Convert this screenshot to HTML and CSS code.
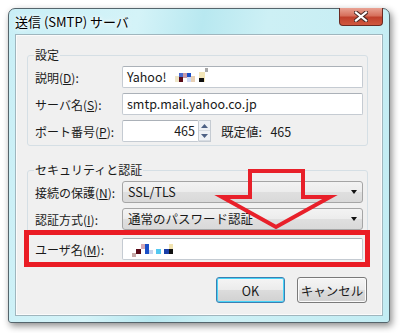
FILE: index.html
```
<!DOCTYPE html>
<html lang="ja">
<head>
    <meta charset="UTF-8">
    <title>送信 (SMTP) サーバ</title>
    <link rel="stylesheet" href="styles.css">
</head>
<body>
    <div class="window">
        <div class="titlebar">
            <span class="title">送信 (SMTP) サーバ</span>
            <span class="close">
                <svg width="14" height="11" viewBox="0 0 14 11">
                    <path d="M2 1.5 L12 9.5 M12 1.5 L2 9.5" stroke="#4a2a26" stroke-width="4.2" stroke-linecap="square"/>
                    <path d="M2 1.5 L12 9.5 M12 1.5 L2 9.5" stroke="#fff" stroke-width="2.2" stroke-linecap="square"/>
                </svg>
            </span>
        </div>
        <div class="client">
            <fieldset class="group">
                <legend>設定</legend>
                <div class="row">
                    <label>説明(<u>D</u>):</label>
                    <div class="field">Yahoo!
                        <svg class="mosaic" width="40" height="18" viewBox="0 0 40 18">
                            <rect x="4" y="8" width="4" height="6" fill="#efe6c8"/>
                            <rect x="8" y="5" width="4" height="4" fill="#4a6ad0"/>
                            <rect x="8" y="9" width="4" height="5" fill="#5a0b18"/>
                            <rect x="12" y="5" width="4" height="5" fill="#c79aa8"/>
                            <rect x="16" y="5" width="4" height="4" fill="#1b4fc8"/>
                            <rect x="16" y="9" width="4" height="5" fill="#cfd9f4"/>
                            <rect x="20" y="8" width="4" height="6" fill="#e8d0b4"/>
                            <rect x="28" y="4" width="6" height="10" fill="#f3e6b8"/>
                            <rect x="28" y="10" width="5" height="4" fill="#111"/>
                            <rect x="34" y="0" width="3" height="4" fill="#a8a8a8"/>
                        </svg>
                    </div>
                </div>
                <div class="row">
                    <label>サーバ名(<u>S</u>):</label>
                    <div class="field">smtp.mail.yahoo.co.jp</div>
                </div>
                <div class="row">
                    <label>ポート番号(<u>P</u>):</label>
                    <div class="field port">465</div>
                    <div class="spin">
                        <span class="spin-btn">
                            <svg width="7" height="4" viewBox="0 0 7 4"><path d="M0 4 L3.5 0 L7 4 Z" fill="#4d6185"/></svg>
                        </span>
                        <span class="spin-btn">
                            <svg width="7" height="4" viewBox="0 0 7 4"><path d="M0 0 L3.5 4 L7 0 Z" fill="#4d6185"/></svg>
                        </span>
                    </div>
                    <span class="default">既定値:&nbsp;&nbsp; 465</span>
                </div>
            </fieldset>

            <fieldset class="group security">
                <legend>セキュリティと認証</legend>
                <div class="row">
                    <label>接続の保護(<u>N</u>):</label>
                    <div class="combo">SSL/TLS<span class="caret"></span></div>
                </div>
                <div class="row">
                    <label>認証方式(<u>I</u>):</label>
                    <div class="combo">通常のパスワード認証<span class="caret"></span></div>
                </div>
                <div class="row highlight">
                    <label>ユーザ名(<u>M</u>):</label>
                    <div class="field">
                        <svg class="mosaic" width="50" height="18" viewBox="0 0 50 18">
                            <rect x="1" y="13" width="4" height="4" fill="#c7aaa8"/>
                            <rect x="5" y="9" width="5" height="5" fill="#5a0b18"/>
                            <rect x="10" y="4" width="4" height="5" fill="#d6a8b4"/>
                            <rect x="14" y="4" width="4" height="10" fill="#1b4fc8"/>
                            <rect x="18" y="10" width="4" height="4" fill="#c6d2ec"/>
                            <rect x="25" y="9" width="5" height="5" fill="#53c8f0"/>
                            <rect x="33" y="9" width="5" height="5" fill="#1a3fa8"/>
                            <rect x="38" y="9" width="4" height="5" fill="#111"/>
                            <rect x="38" y="4" width="4" height="5" fill="#f0e2b0"/>
                        </svg>
                    </div>
                </div>
            </fieldset>

            <div class="buttons">
                <span class="button primary">OK</span>
                <span class="button">キャンセル</span>
            </div>
        </div>
    </div>

    <svg class="arrow" width="400" height="333" viewBox="0 0 400 333">
        <path d="M250 171 L303 171 L303 197 L330 197 L276 227 L222 197 L250 197 Z"
              fill="none" stroke="#e8202a" stroke-width="4" stroke-linejoin="miter"/>
    </svg>
</body>
</html>
```

FILE: styles.css
```
body {
    margin: 0;
    position: relative;
    width: 400px;
    height: 333px;
    background: #fff;
    font-family: "Noto Sans CJK JP", sans-serif;
    font-size: 12px;
    color: #1a1a1a;
    overflow: hidden;
}

/* ウィンドウ枠 */
.window {
    width: 382px;
    height: 315px;
    margin: 8px 0 0 8px;
    box-sizing: border-box;
    border: 1px solid #55656c;
    border-radius: 7px 7px 3px 3px;
    background: linear-gradient(100deg, #c9eff6 0%, #d4f3f8 30%, #b8e8f0 45%, #cdf0f5 60%, #c2ecf3 100%);
    box-shadow: 2px 3px 7px rgba(0, 0, 0, .45);
    padding: 0 6px 6px;
    display: flex;
    flex-direction: column;
}
.titlebar {
    height: 25px;
    display: flex;
    align-items: flex-start;
}
.title {
    font-size: 13px;
    line-height: 14px;
    margin-top: 6px;
    color: #000;
    text-shadow: 0 0 6px #fff, 0 0 3px #fff;
}
.close {
    margin-left: auto;
    margin-top: -1px;
    width: 44px;
    height: 18px;
    box-sizing: border-box;
    border: 1px solid #6b2a22;
    border-top: none;
    border-radius: 0 0 4px 4px;
    background: linear-gradient(#e9a394 0%, #d7705c 45%, #c0402c 55%, #d0583f 100%);
    display: flex;
    align-items: center;
    justify-content: center;
}

.client {
    flex: 1;
    border: 1px solid #9fb6be;
    background: #f0f0f0;
    padding: 13px 14px 0 11px;
    box-shadow: inset 0 0 0 1px #fbfbfb;
}

/* グループボックス */
.group {
    margin: 0;
    padding: 0 4px 3px 6px;
    border: 1px solid #d5dfe5;
    border-radius: 3px;
}
.group legend {
    padding: 0 1px;
    line-height: 14px;
}
.security {
    margin-top: 17px;
    padding-bottom: 0;
}

.row {
    display: flex;
    align-items: center;
    height: 22px;
    margin-top: 5px;
}
.row:first-of-type {
    margin-top: 4px;
}
.row label {
    width: 88px;
    padding-left: 1px;
    box-sizing: border-box;
    flex-shrink: 0;
}

.field {
    flex: 1;
    height: 22px;
    box-sizing: border-box;
    border: 1px solid #c5cbd2;
    border-top-color: #abb1b8;
    border-radius: 2px;
    background: #fff;
    padding: 0 4px;
    font-size: 12.5px;
    line-height: 20px;
    display: flex;
    align-items: center;
}
.mosaic {
    margin-left: 4px;
}
.field.port {
    flex: none;
    width: 77px;
    justify-content: flex-end;
    padding-right: 3px;
}
.spin {
    width: 11px;
    height: 20px;
    display: flex;
    flex-direction: column;
    border: 1px solid #c5cbd2;
    border-left: none;
    background: #eef1f5;
}
.spin-btn {
    flex: 1;
    display: flex;
    align-items: center;
    justify-content: center;
    border-bottom: 1px solid #d7dce2;
}
.default {
    margin-left: 10px;
    font-size: 12.5px;
}

/* コンボボックス */
.combo {
    flex: 1;
    height: 22px;
    box-sizing: border-box;
    border: 1px solid #a5a5a5;
    border-radius: 3px;
    background: linear-gradient(#f3f3f3 0%, #ececec 50%, #dfdfdf 51%, #d9d9d9 100%);
    padding-left: 5px;
    font-size: 12.5px;
    line-height: 20px;
    display: flex;
    align-items: center;
}
.caret {
    margin-left: auto;
    margin-right: 5px;
    width: 0;
    height: 0;
    border-left: 3px solid transparent;
    border-right: 3px solid transparent;
    border-top: 4px solid #111;
}

/* 赤枠 */
.row.highlight {
    height: auto;
    margin: 0 -7px -4px -10px;
    border: 5px solid #ea1c24;
    padding: 3px 2px 2px 5px;
}

.buttons {
    display: flex;
    justify-content: flex-end;
    gap: 12px;
    margin-top: 13px;
    padding-right: 1px;
}
.button {
    width: 70px;
    height: 26px;
    box-sizing: border-box;
    border: 1px solid #7a7a7a;
    border-radius: 3px;
    background: linear-gradient(#f5f5f5 0%, #ebebeb 50%, #dcdcdc 51%, #d1d1d1 100%);
    box-shadow: inset 0 0 0 1px #fbfbfb;
    font-size: 12.5px;
    display: flex;
    align-items: center;
    justify-content: center;
}
.button.primary {
    width: 69px;
    border-color: #3c7fb1;
    box-shadow: inset 0 0 0 1px #48d4f8;
}

.arrow {
    position: absolute;
    left: 0;
    top: 0;
    pointer-events: none;
}
```
